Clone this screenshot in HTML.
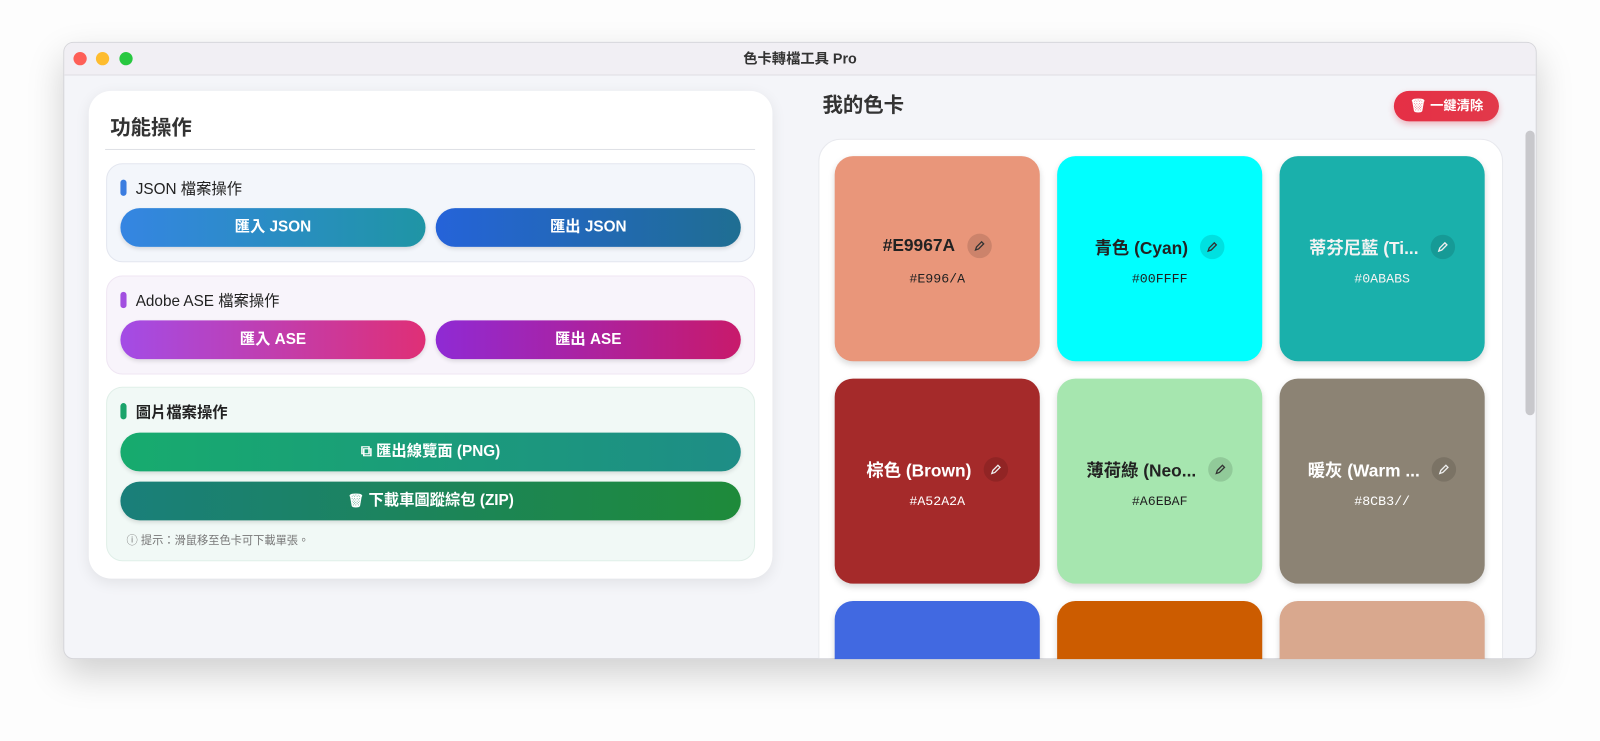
<!DOCTYPE html>
<html><head><meta charset="utf-8"><style>
*{box-sizing:border-box;margin:0;padding:0}
html,body{width:1600px;height:741px;overflow:hidden}
body{background:#fdfdfd;font-family:"Liberation Sans","Noto Sans CJK TC",sans-serif;position:relative}
#wrap{position:absolute;left:0;top:0;width:1568px;height:726px;transform:scale(1.0204);transform-origin:0 0}
.win{position:absolute;left:62px;top:41px;width:1444px;height:605px;border-radius:10px;background:#f4f5f9;border:1px solid #d6d6da;overflow:hidden;box-shadow:0 15px 35px rgba(0,0,0,.18)}
.tb{height:32px;background:#f1eff4;border-bottom:1px solid #dedde2;position:relative;text-align:center;font-size:14px;font-weight:bold;line-height:31px;color:#333}
.dot{position:absolute;top:9px;width:13px;height:13px;border-radius:50%}
.lp{position:absolute;left:24px;top:47px;width:670px;height:478px;background:#fff;border-radius:22px;box-shadow:0 4px 14px rgba(0,0,0,.08)}
.lp h2{position:absolute;left:21px;top:20px;font-size:20px;color:#333}
.div{position:absolute;left:16px;top:57px;width:637px;height:1px;background:#dfe1e6}
.sec{position:absolute;left:17px;width:636px;border-radius:16px;border:1px solid #e3e6ef}
.st{position:absolute;left:13px;top:13px;font-size:15px;color:#222;padding-left:15px}
.st:before{content:"";position:absolute;left:0;top:2px;width:6px;height:16px;border-radius:3px;background:var(--c)}
.btn{position:absolute;height:38px;border-radius:19px;color:#fff;font-weight:bold;font-size:15px;text-align:center;line-height:38px;box-shadow:0 2px 4px rgba(0,0,0,.12)}
.rp-t{position:absolute;left:743px;top:45px;font-size:20px;font-weight:bold;color:#333}
.clr{position:absolute;left:1303px;top:47px;width:103px;height:30px;border-radius:15px;background:linear-gradient(90deg,#e52f45,#e2394a);color:#fff;font-size:13px;font-weight:bold;line-height:30px;text-align:center;box-shadow:0 3px 6px rgba(220,40,60,.3)}
.grid{position:absolute;left:739px;top:94px;width:671px;height:560px;background:#fff;border-radius:22px;border:1px solid #e8e9ee}
.card{position:absolute;width:201px;height:201px;border-radius:18px;box-shadow:0 3px 6px rgba(0,0,0,.15)}
.nm{position:absolute;top:76px;left:0;width:201px;text-align:center;font-size:17px;font-weight:bold}
.nm span{display:inline-block;vertical-align:middle}
.ed{display:inline-block;width:24px;height:24px;border-radius:50%;background:rgba(0,0,0,.12);margin-left:12px;vertical-align:middle;position:relative}
.ed svg{position:absolute;left:6px;top:6px}
.hx{position:absolute;top:113px;left:0;width:201px;text-align:center;font-family:"Liberation Mono",monospace;font-size:13px}
.sb{position:absolute;left:1432px;top:86px;width:9px;height:279px;border-radius:5px;background:#c8c8cc}
</style></head><body>
<div id="wrap">
<div class="win">
<div class="tb"><div class="dot" style="left:9px;background:#fe5f57"></div><div class="dot" style="left:31px;background:#febc2e"></div><div class="dot" style="left:54px;background:#28c840"></div>色卡轉檔工具 Pro</div>
<div class="lp">
<h2>功能操作</h2><div class="div"></div>
<div class="sec" style="top:71px;height:97px;background:#f3f6fb">
<div class="st" style="--c:#3b7de0">JSON 檔案操作</div>
<div class="btn" style="left:13px;top:43px;width:299px;background:linear-gradient(90deg,#3585e2,#1f95a5)">匯入 JSON</div>
<div class="btn" style="left:322px;top:43px;width:299px;background:linear-gradient(90deg,#2563d9,#1f6e92)">匯出 JSON</div>
</div>
<div class="sec" style="top:181px;height:97px;background:#f8f4fb;border-color:#efe6f3">
<div class="st" style="--c:#a24fe0">Adobe ASE 檔案操作</div>
<div class="btn" style="left:13px;top:43px;width:299px;background:linear-gradient(90deg,#a34ce6,#df2f76)">匯入 ASE</div>
<div class="btn" style="left:322px;top:43px;width:299px;background:linear-gradient(90deg,#8f2ad4,#c81a6b)">匯出 ASE</div>
</div>
<div class="sec" style="top:290px;height:171px;background:#f1f9f6;border-color:#e0efe8">
<div class="st" style="--c:#1aa36a;font-weight:bold">圖片檔案操作</div>
<div class="btn" style="left:13px;top:44px;width:608px;background:linear-gradient(90deg,#17ab6e,#1e8d86)">⧉ 匯出線覽面 (PNG)</div>
<div class="btn" style="left:13px;top:92px;width:608px;background:linear-gradient(90deg,#1a7f7a,#1e8a3a)"><span style="font-size:13px">🗑</span> 下載車圖蹤綜包 (ZIP)</div>
<div style="position:absolute;left:19px;top:141px;font-size:11px;color:#777">ⓘ 提示：滑鼠移至色卡可下載單張。</div>
</div>
</div>
<div class="rp-t">我的色卡</div>
<div class="clr">🗑 一鍵清除</div>
<div class="grid"></div>
<div class="sb"></div>
</div>
<div style="position:absolute;left:62px;top:41px;width:1444px;height:605px;overflow:hidden;border-radius:10px;pointer-events:none">
<div class="card" style="left:756px;top:112px;background:#e9967a;color:#222"><div class="nm"><span>#E9967A</span><span class="ed"><svg width="12" height="12" viewBox="0 0 12 12"><path d="M2 10l1-3 5-5 2 2-5 5z" fill="none" stroke="#333" stroke-width="1.3"/></svg></span></div><div class="hx">#E996/A</div></div>
<div class="card" style="left:974px;top:112px;background:#00ffff;color:#222"><div class="nm"><span>青色 (Cyan)</span><span class="ed"><svg width="12" height="12" viewBox="0 0 12 12"><path d="M2 10l1-3 5-5 2 2-5 5z" fill="none" stroke="#333" stroke-width="1.3"/></svg></span></div><div class="hx">#00FFFF</div></div>
<div class="card" style="left:1192px;top:112px;background:#1ab0ab;color:#f3f3f3"><div class="nm"><span>蒂芬尼藍 (Ti...</span><span class="ed"><svg width="12" height="12" viewBox="0 0 12 12"><path d="M2 10l1-3 5-5 2 2-5 5z" fill="none" stroke="#eee" stroke-width="1.3"/></svg></span></div><div class="hx">#0ABABS</div></div>
<div class="card" style="left:756px;top:330px;background:#a52a2a;color:#fff"><div class="nm"><span>棕色 (Brown)</span><span class="ed"><svg width="12" height="12" viewBox="0 0 12 12"><path d="M2 10l1-3 5-5 2 2-5 5z" fill="none" stroke="#eee" stroke-width="1.3"/></svg></span></div><div class="hx">#A52A2A</div></div>
<div class="card" style="left:974px;top:330px;background:#a6e6af;color:#222"><div class="nm"><span>薄荷綠 (Neo...</span><span class="ed"><svg width="12" height="12" viewBox="0 0 12 12"><path d="M2 10l1-3 5-5 2 2-5 5z" fill="none" stroke="#333" stroke-width="1.3"/></svg></span></div><div class="hx">#A6EBAF</div></div>
<div class="card" style="left:1192px;top:330px;background:#8c8374;color:#fff"><div class="nm"><span>暖灰 (Warm ...</span><span class="ed"><svg width="12" height="12" viewBox="0 0 12 12"><path d="M2 10l1-3 5-5 2 2-5 5z" fill="none" stroke="#eee" stroke-width="1.3"/></svg></span></div><div class="hx">#8CB3//</div></div>
<div class="card" style="left:756px;top:548px;background:#4169e1"></div>
<div class="card" style="left:974px;top:548px;background:#cc5c00"></div>
<div class="card" style="left:1192px;top:548px;background:#d9a88e"></div>
</div>
</div>
</body></html>
